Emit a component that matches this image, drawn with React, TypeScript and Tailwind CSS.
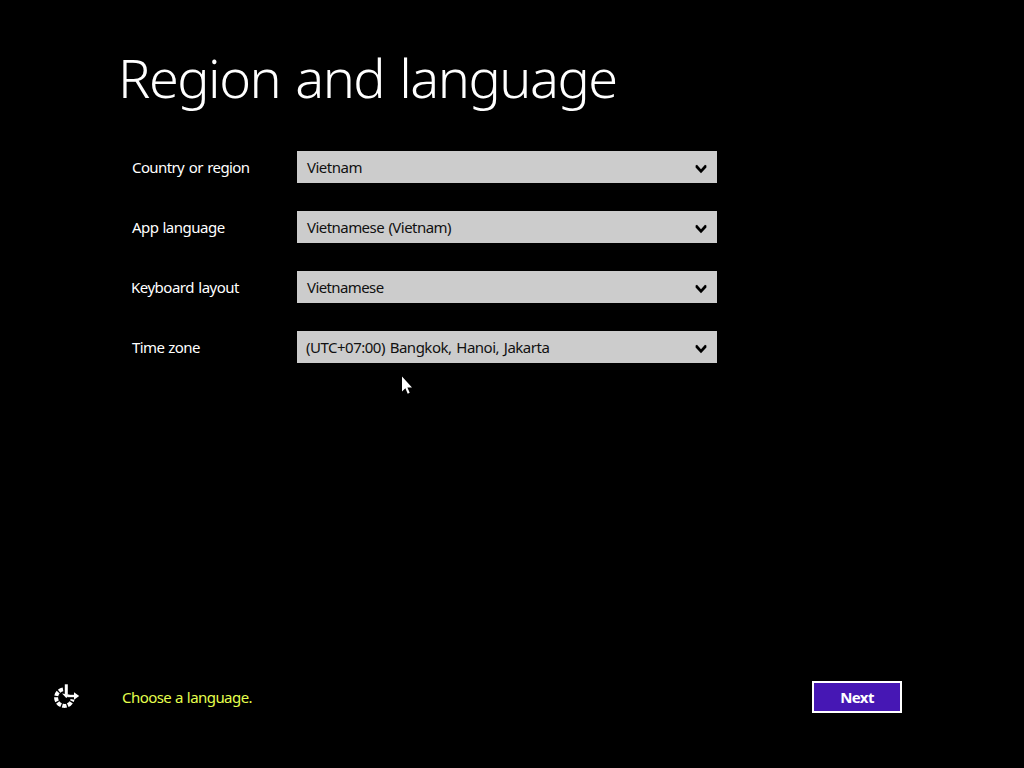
interface Field {
  label: string;
  value: string;
  labelClass: string;
  valueClass: string;
}

const fields: Field[] = [
  {
    label: "Country or region",
    value: "Vietnam",
    labelClass: "tracking-[-0.6px] [word-spacing:1.2px]",
    valueClass: "tracking-[-0.5px]",
  },
  {
    label: "App language",
    value: "Vietnamese (Vietnam)",
    labelClass: "tracking-[-0.5px] [word-spacing:0.5px]",
    valueClass: "tracking-[-0.55px] [word-spacing:1px]",
  },
  {
    label: "Keyboard layout",
    value: "Vietnamese",
    labelClass: "-ml-px mr-px tracking-[-0.5px] [word-spacing:1px]",
    valueClass: "tracking-[-0.6px]",
  },
  {
    label: "Time zone",
    value: "(UTC+07:00) Bangkok, Hanoi, Jakarta",
    labelClass: "tracking-[-0.55px] [word-spacing:0.5px]",
    valueClass: "-ml-px tracking-[-0.5px] [word-spacing:1.4px]",
  },
];

function SelectRow({ label, value, labelClass, valueClass }: Field) {
  return (
    <div className="flex h-8 items-center">
      <span className={`w-[165px] shrink-0 whitespace-nowrap text-white ${labelClass}`}>{label}</span>
      <button type="button" className="flex h-8 w-[420px] items-center justify-between bg-[#cccccc] pr-[10px] pl-[10px] text-[#111111]">
        <span className={`whitespace-nowrap ${valueClass}`}>{value}</span>
        <svg className="mt-[3px]" width="12" height="10" viewBox="0 0 12 10">
          <path d="M.6 1.4l1.4-.6L6 5.2 10 .8l1.4.6v2.2L6 9.2.6 3.6z" fill="black" />
        </svg>
      </button>
    </div>
  );
}

function EaseOfAccessIcon() {
  return (
    <svg width="27" height="26" viewBox="0 0 27 26" fill="none" stroke="white">
      <path d="M10 5.4A8.3 8.3 0 1 0 19.5 15.4" strokeWidth="4" strokeDasharray="4.3 1.3" />
      <path d="M13.3.3v10.5" strokeWidth="3" />
      <path d="M9 9.4l4.3 4.6 3.4-3.2" fill="white" stroke="none" />
      <path d="M14.5 12h8" strokeWidth="2.4" />
      <path d="M21 8.2l5.2 3.8-5.2 3.8z" fill="white" stroke="none" />
    </svg>
  );
}

function Cursor() {
  return (
    <svg className="absolute top-[376px] left-[401px]" width="12" height="19" viewBox="0 0 12 19">
      <path d="M1 .5v15l3.4-3.2 2.3 5.4 2-.9-2.3-5.2H11z" fill="white" />
    </svg>
  );
}

export default function App() {
  return (
    <div className="relative flex h-screen w-full flex-col overflow-hidden bg-black font-['Noto_Sans','Open_Sans',sans-serif] text-[15px] leading-5">
      <h1 className="mt-[41px] ml-[118px] h-[72px] text-[54px] leading-[72px] font-light tracking-[-1.5px] whitespace-nowrap text-white [word-spacing:2.5px]">
        Region and language
      </h1>
      <main className="mt-[38px] ml-[132px] flex flex-col gap-7">
        {fields.map((field) => (
          <SelectRow key={field.label} {...field} />
        ))}
      </main>
      <footer className="mt-auto mb-[55px] flex h-8 items-center pr-[122px] pl-[53px]">
        <EaseOfAccessIcon />
        <p className="ml-[42px] tracking-[-0.55px] text-[#e6ff4d] [word-spacing:0.5px]">Choose a language.</p>
        <button type="button" className="ml-auto h-8 w-[90px] border-2 border-white bg-[#4617b4] font-bold tracking-[-0.6px] text-white">
          Next
        </button>
      </footer>
      <Cursor />
    </div>
  );
}
